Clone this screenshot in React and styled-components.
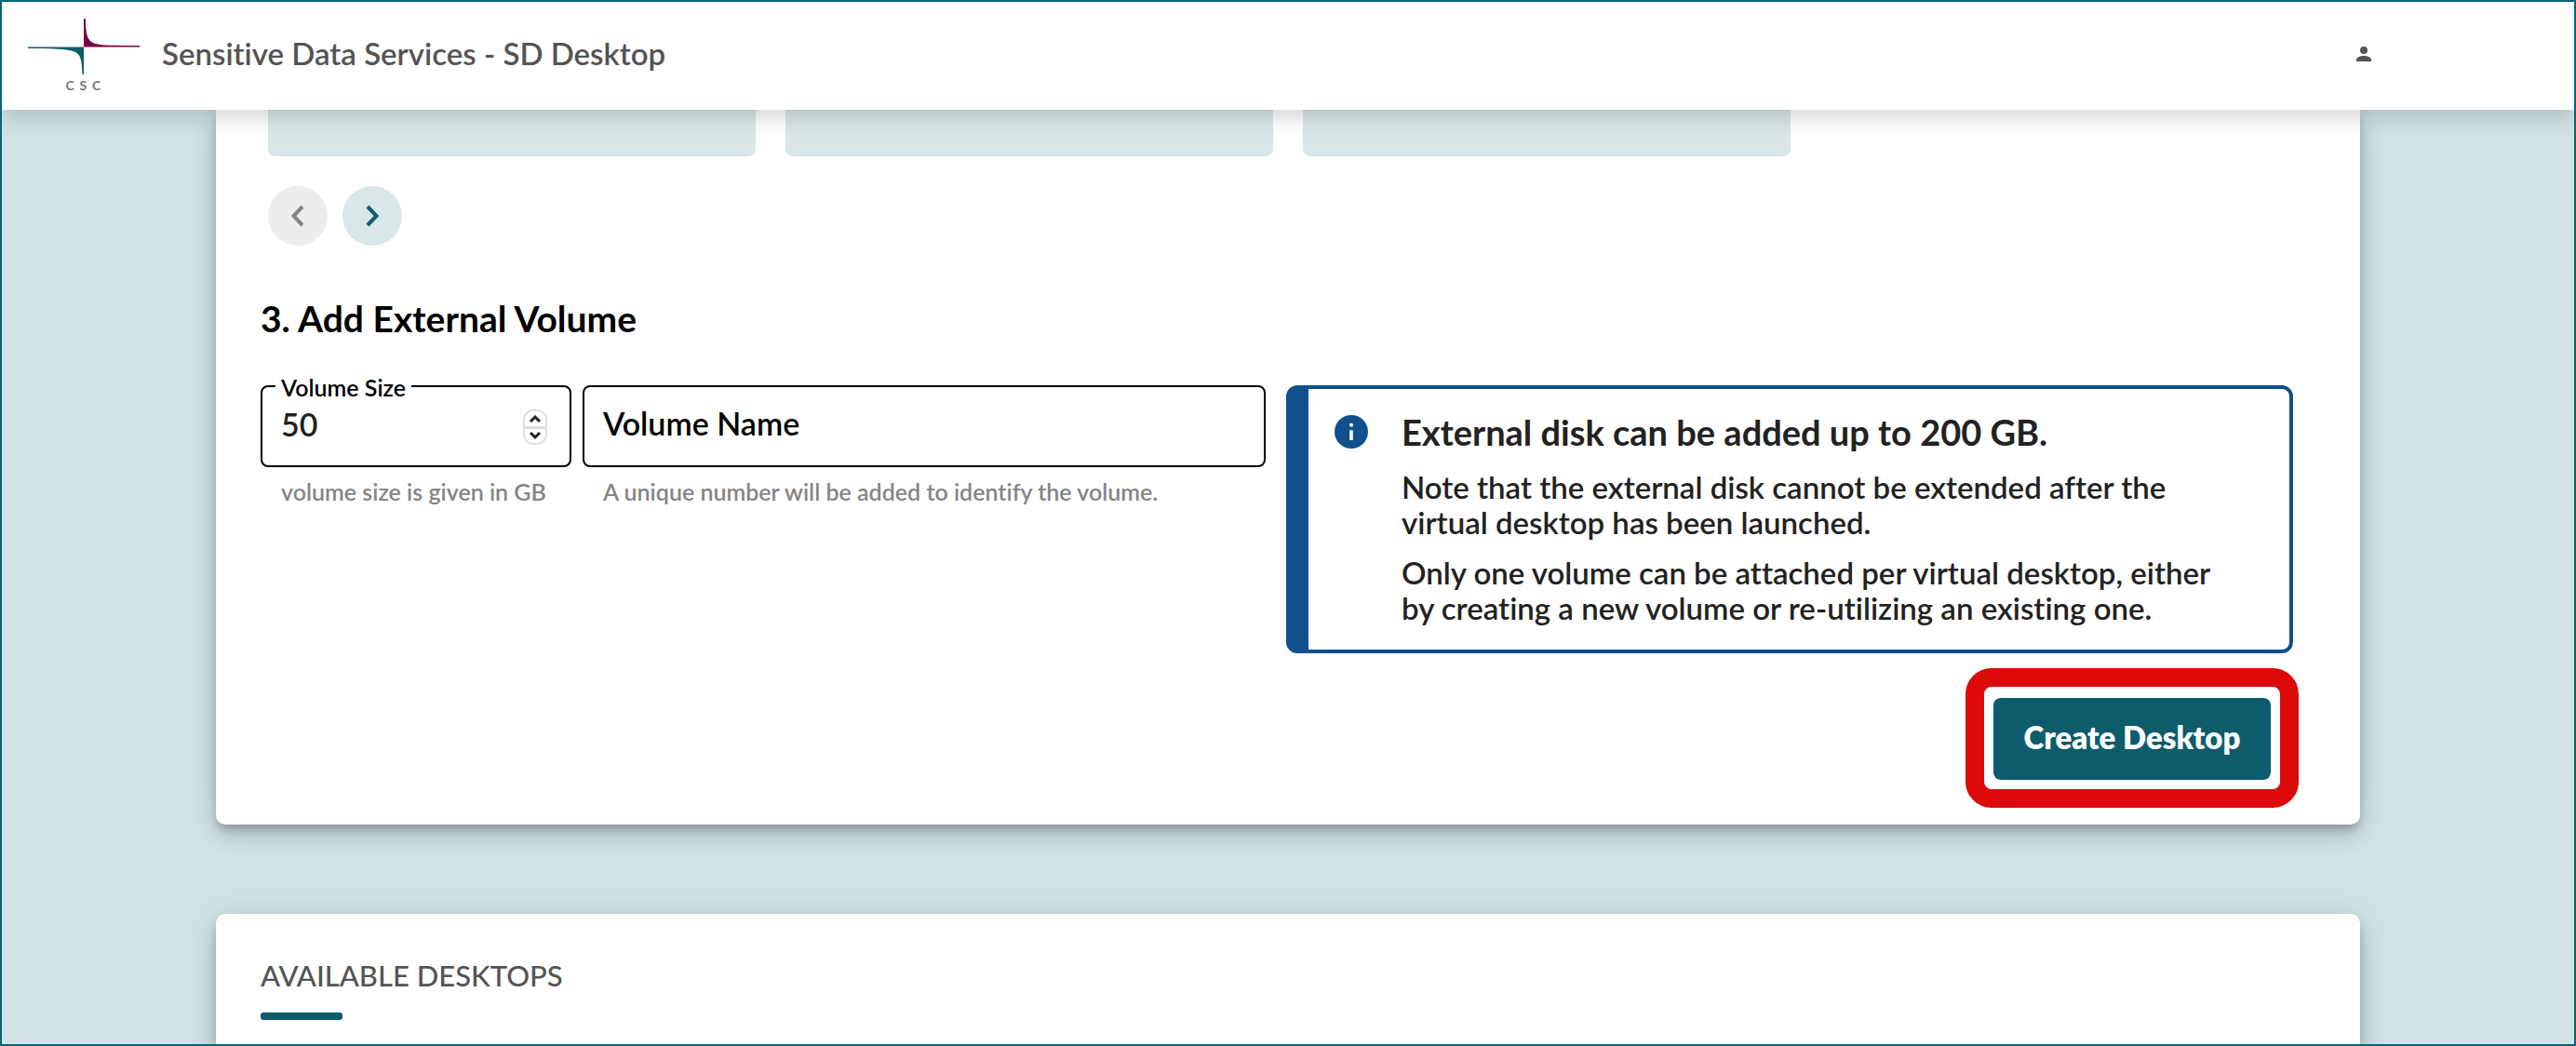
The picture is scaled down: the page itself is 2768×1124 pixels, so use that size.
import React, { useState } from 'react';
import styled, { createGlobalStyle } from 'styled-components';

const color = {
  teal: '#0d5c6b',
  frame: '#00677a',
  page: '#d1e3e6',
  tile: '#dae6e7',
  blue: '#10508c',
  red: '#dc0a0a',
  ink: '#222222',
  grey: '#545454',
  hint: '#858585',
};

const GlobalStyle = createGlobalStyle`
  *, *::before, *::after { box-sizing: border-box; }
  body {
    margin: 0;
    background: ${color.page};
    font-family: Lato, 'Open Sans', sans-serif;
    font-variant-ligatures: none;
  }
  h1, h2, h3, p { margin: 0; }
  button, input { font: inherit; }
`;

const Frame = styled.div`
  display: flex;
  flex-direction: column;
  height: 100vh;
  overflow: hidden;
  border: 2px solid ${color.frame};
`;

const Header = styled.header`
  position: relative;
  z-index: 1;
  flex: none;
  display: flex;
  align-items: center;
  gap: 22px;
  height: 116px;
  padding: 0 210px 0 28px;
  background: #ffffff;
  box-shadow: 0 8px 22px rgba(0, 0, 0, 0.17);
`;

const LogoLink = styled.a`
  display: flex;
`;

const AppTitle = styled.h1`
  flex: 1;
  padding-bottom: 6px;
  color: ${color.grey};
  font-size: 33px;
  font-weight: 600;
  line-height: 40px;
`;

const IconButton = styled.button`
  display: flex;
  padding: 6px 8px 10px;
  border: 0;
  background: none;
  color: ${color.grey};
  cursor: pointer;
`;

const Main = styled.main`
  flex: 1;
  display: flex;
  flex-direction: column;
  gap: 96px;
  width: 100%;
  max-width: 2304px;
  min-height: 0;
  margin: 0 auto;
`;

const Card = styled.section`
  flex: none;
  padding: ${(p) => (p.$continued ? '0 72px 18px 48px' : '46px 72px 60px 48px')};
  border-radius: ${(p) => (p.$continued ? '0 0 10px 10px' : '10px')};
  background: #ffffff;
  box-shadow:
    0 6px 10px -2px rgba(0, 0, 0, 0.2),
    0 12px 20px rgba(0, 0, 0, 0.14),
    0 2px 36px rgba(0, 0, 0, 0.12);
`;

const Carousel = styled.div`
  padding-left: 8px;
`;

const Tiles = styled.div`
  display: grid;
  grid-template-columns: repeat(3, minmax(0, 524px));
  gap: 32px;
`;

const Tile = styled.div`
  height: 50px;
  border-radius: 0 0 8px 8px;
  background: ${color.tile};
`;

const Pager = styled.div`
  display: flex;
  gap: 16px;
  margin-top: 32px;
`;

const PagerButton = styled.button`
  display: flex;
  align-items: center;
  justify-content: center;
  width: 64px;
  height: 64px;
  padding: 0;
  border: 0;
  border-radius: 50%;
  background: ${color.tile};
  color: ${color.teal};
  cursor: pointer;

  &:disabled {
    background: #ecedef;
    color: #858585;
    cursor: default;
  }
`;

const StepTitle = styled.h2`
  margin: 54px 0 48px;
  color: #000000;
  font-size: 39px;
  font-weight: 700;
  line-height: 48px;
`;

const VolumeRow = styled.div`
  display: grid;
  grid-template-columns: 1080fr 1082fr;
  gap: 22px;
  align-items: start;
`;

const Fields = styled.div`
  display: grid;
  grid-template-columns: 334px 1fr;
  gap: 12px;
`;

const Field = styled.div`
  display: flex;
  flex-direction: column;
  gap: 10px;
`;

const Outline = styled.div`
  position: relative;
  display: flex;
  align-items: center;
  height: 88px;
  padding: 0 24px 0 20px;
  border: 2px solid #000000;
  border-radius: 8px;
`;

const FieldLabel = styled.label`
  position: absolute;
  color: #000000;
  font-weight: 600;
  pointer-events: none;
  ${(p) =>
    p.$floating
      ? `
    top: -12px;
    left: 14px;
    padding: 0 6px;
    background: #ffffff;
    font-size: 25px;
    line-height: 24px;
  `
      : `
    top: 20px;
    left: 20px;
    font-size: 34px;
    line-height: 38px;
  `}
`;

const TextInput = styled.input`
  flex: 1;
  min-width: 0;
  height: 100%;
  padding: 0 0 6px;
  border: 0;
  outline: 0;
  background: transparent;
  color: ${color.ink};
  font-size: 34px;
  font-weight: 600;
  appearance: textfield;

  &::-webkit-inner-spin-button {
    display: none;
  }
`;

const Stepper = styled.div`
  flex: none;
  display: flex;
  flex-direction: column;
  width: 26px;
  height: 38px;
  margin-top: 2px;
  border: 2px solid #e0e0e0;
  border-radius: 11px;
  background: #ffffff;
`;

const StepButton = styled.button`
  flex: 1;
  display: flex;
  align-items: center;
  justify-content: center;
  padding: 0;
  border: 0;
  background: none;
  color: ${color.ink};

  & + & {
    border-top: 3px solid #dedede;
  }
`;

const Hint = styled.p`
  padding-left: 22px;
  color: ${color.hint};
  font-size: 25px;
  font-weight: 600;
  line-height: 32px;
`;

const Alert = styled.aside`
  display: flex;
  align-items: flex-start;
  gap: 36px;
  padding: 22px 56px 26px 28px;
  border: 4px solid ${color.blue};
  border-left-width: 24px;
  border-radius: 12px;
  color: ${color.ink};
`;

const AlertIcon = styled.svg`
  flex: none;
  margin-top: 6px;
`;

const AlertBody = styled.div`
  display: flex;
  flex-direction: column;
  gap: 16px;
  font-size: 33px;
  font-weight: 600;
  line-height: 38px;
`;

const AlertTitle = styled.h3`
  font-size: 38px;
  font-weight: 700;
  line-height: 48px;
`;

const Actions = styled.div`
  display: flex;
  justify-content: flex-end;
  margin: 16px -6px 0 0;
`;

const Highlight = styled.div`
  padding: 12px 10px 10px;
  border: 20px solid ${color.red};
  border-radius: 28px;
`;

const PrimaryButton = styled.button`
  width: 298px;
  height: 88px;
  padding: 0 0 4px;
  border: 0;
  border-radius: 8px;
  background: ${color.teal};
  color: #ffffff;
  font-size: 33px;
  font-weight: 800;
  cursor: pointer;
`;

const SectionTitle = styled.h2`
  color: ${color.grey};
  font-size: 31px;
  font-weight: 500;
  line-height: 40px;
  text-transform: uppercase;

  &::after {
    content: '';
    display: block;
    width: 88px;
    height: 8px;
    margin-top: 20px;
    border-radius: 3px;
    background: ${color.teal};
  }
`;

function Logo() {
  return (
    <svg width="122" height="80" viewBox="0 0 122 80" role="img" aria-label="CSC">
      <path fill="#7a0046" d="M60 0h2c0 17 2 24 9 26.500c7 2.500 24 2.500 49 2.500v1.500H60z" />
      <path fill={color.teal} d="M0 30.500h60V60h-1.500c-.5-16-2-21.500-8.500-24.500c-8-3-25-3.500-50-3.500z" />
      <text x="40.500 55.500 69" y="76.500" fill="#6f767c" fontFamily="Lato, sans-serif" fontWeight="700" fontSize="14">
        CSC
      </text>
    </svg>
  );
}

function Chevron({ d, size, box, stroke }) {
  return (
    <svg width={size[0]} height={size[1]} viewBox={box} fill="none" stroke="currentColor" strokeWidth={stroke} aria-hidden="true">
      <path d={d} />
    </svg>
  );
}

export default function App() {
  const [size, setSize] = useState(50);
  const [name, setName] = useState('');

  return (
    <>
      <GlobalStyle />
      <Frame>
        <Header>
          <LogoLink href="#">
            <Logo />
          </LogoLink>
          <AppTitle>Sensitive Data Services - SD Desktop</AppTitle>
          <IconButton type="button" aria-label="Account">
            <svg width="16" height="16" viewBox="4 4 16 16" fill="currentColor" aria-hidden="true">
              <path d="M12 4a4 4 0 1 1 0 8a4 4 0 0 1 0-8zm0 10c4.420 0 8 1.790 8 4v2H4v-2c0-2.210 3.580-4 8-4z" />
            </svg>
          </IconButton>
        </Header>

        <Main>
          <Card $continued>
            <Carousel>
              <Tiles>
                <Tile />
                <Tile />
                <Tile />
              </Tiles>
              <Pager>
                <PagerButton type="button" aria-label="Previous" disabled>
                  <Chevron size={[24, 24]} box="0 0 24 24" stroke={4} d="M17 2L7.500 12L17 22" />
                </PagerButton>
                <PagerButton type="button" aria-label="Next">
                  <Chevron size={[24, 24]} box="0 0 24 24" stroke={4} d="M7 2L16.500 12L7 22" />
                </PagerButton>
              </Pager>
            </Carousel>

            <StepTitle>3. Add External Volume</StepTitle>

            <VolumeRow>
              <Fields>
                <Field>
                  <Outline>
                    <FieldLabel htmlFor="volume-size" $floating>
                      Volume Size
                    </FieldLabel>
                    <TextInput
                      id="volume-size"
                      type="number"
                      value={size}
                      onChange={(e) => setSize(Number(e.target.value))}
                    />
                    <Stepper>
                      <StepButton type="button" aria-label="Increase" onClick={() => setSize(size + 1)}>
                        <Chevron size={[14, 10]} box="0 0 14 10" stroke={3} d="M2 8L7 3L12 8" />
                      </StepButton>
                      <StepButton type="button" aria-label="Decrease" onClick={() => setSize(size - 1)}>
                        <Chevron size={[14, 10]} box="0 0 14 10" stroke={3} d="M2 2L7 7L12 2" />
                      </StepButton>
                    </Stepper>
                  </Outline>
                  <Hint>volume size is given in GB</Hint>
                </Field>

                <Field>
                  <Outline>
                    <FieldLabel htmlFor="volume-name" $floating={name !== ''}>
                      Volume Name
                    </FieldLabel>
                    <TextInput id="volume-name" type="text" value={name} onChange={(e) => setName(e.target.value)} />
                  </Outline>
                  <Hint>A unique number will be added to identify the volume.</Hint>
                </Field>
              </Fields>

              <Alert>
                <AlertIcon width="36" height="36" viewBox="0 0 36 36" aria-hidden="true">
                  <circle cx="18" cy="18" r="18" fill={color.blue} />
                  <path fill="#ffffff" d="M16.200 9h3.600v3.600h-3.600zM16.200 16.200h3.600V27h-3.600z" />
                </AlertIcon>
                <AlertBody>
                  <AlertTitle>External disk can be added up to 200 GB.</AlertTitle>
                  <p>Note that the external disk cannot be extended after the virtual desktop has been launched.</p>
                  <p>
                    Only one volume can be attached per virtual desktop, either by creating a new volume or re-utilizing
                    an existing one.
                  </p>
                </AlertBody>
              </Alert>
            </VolumeRow>

            <Actions>
              <Highlight>
                <PrimaryButton type="button">Create Desktop</PrimaryButton>
              </Highlight>
            </Actions>
          </Card>

          <Card>
            <SectionTitle>Available Desktops</SectionTitle>
          </Card>
        </Main>
      </Frame>
    </>
  );
}
